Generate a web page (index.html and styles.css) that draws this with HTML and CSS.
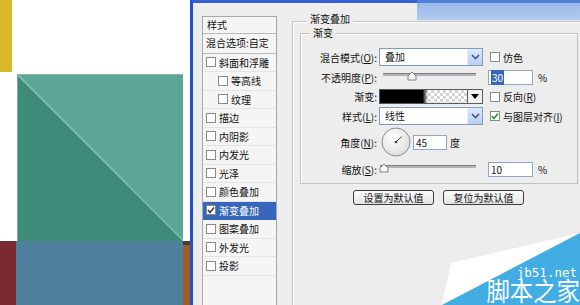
FILE: index.html
```html
<!DOCTYPE html>
<html lang="zh-CN">
<head>
  <title>图层样式 | 渐变叠加</title>
  <meta charset="UTF-8" />
  <meta name="viewport" content="width=device-width, initial-scale=1.0" />
  <link rel="stylesheet" href="styles.css">
</head>
<body>
  <div class="page">
    <div class="canvas">
      <div class="cv-top"><div class="yellow"></div></div>
      <div class="cv-mid"><div class="teal"></div></div>
      <div class="cv-bottom">
        <div class="red"></div>
        <div class="steel"></div>
        <div class="brown"></div>
      </div>
    </div>

    <div class="dialog">
      <div class="titlebar"></div>

      <div class="style-list">
        <div class="list-head">样式</div>
        <div class="list-blend">混合选项:自定</div>
        <div class="list-item"><span class="cb"></span>斜面和浮雕</div>
        <div class="list-item sub"><span class="cb"></span>等高线</div>
        <div class="list-item sub"><span class="cb"></span>纹理</div>
        <div class="list-item"><span class="cb"></span>描边</div>
        <div class="list-item"><span class="cb"></span>内阴影</div>
        <div class="list-item"><span class="cb"></span>内发光</div>
        <div class="list-item"><span class="cb"></span>光泽</div>
        <div class="list-item"><span class="cb"></span>颜色叠加</div>
        <div class="list-item active">
          <span class="cb"><svg width="8" height="8" viewBox="0 0 8 8"><polyline points="1,4 3,6.5 7,1.5" fill="none" stroke="#3a3a3a" stroke-width="1.6"/></svg></span>渐变叠加
        </div>
        <div class="list-item"><span class="cb"></span>图案叠加</div>
        <div class="list-item"><span class="cb"></span>外发光</div>
        <div class="list-item"><span class="cb"></span>投影</div>
      </div>

      <div class="outer-group">
        <div class="legend outer-legend">渐变叠加</div>
        <div class="inner-group">
          <div class="legend inner-legend">渐变</div>
          <div class="rows">
            <div class="row r1">
              <span class="lbl">混合模式(<u>O</u>):</span>
              <div class="select"><span class="sel-text">叠加</span><span class="sel-btn"><svg width="9" height="6" viewBox="0 0 9 6"><polyline points="1,1 4.5,4.5 8,1" fill="none" stroke="#3f5a8c" stroke-width="1.6"/></svg></span></div>
              <span class="cb"></span><span class="opt">仿色</span>
            </div>
            <div class="row r2">
              <span class="lbl">不透明度(<u>P</u>):</span>
              <svg class="slider" width="104" height="10" viewBox="0 0 104 10">
                <rect x="4" y="2" width="93" height="3" fill="#b4b4b4"/>
                <rect x="4" y="2" width="93" height="1" fill="#7d7d7d"/>
                <polygon points="29,9 29,5 33,1 37,5 37,9" fill="#fafafa" stroke="#808080"/>
              </svg>
              <span class="field wide"><span class="hl">30</span></span>
              <span class="unit">%</span>
            </div>
            <div class="row r3">
              <span class="lbl">渐变:</span>
              <div class="swatch"><span class="grad"></span><span class="sw-btn"><svg width="8" height="5" viewBox="0 0 8 5"><polygon points="0,0 8,0 4,5" fill="#000"/></svg></span></div>
              <span class="cb"></span><span class="opt">反向(<u>R</u>)</span>
            </div>
            <div class="row r4">
              <span class="lbl">样式(<u>L</u>):</span>
              <div class="select"><span class="sel-text">线性</span><span class="sel-btn"><svg width="9" height="6" viewBox="0 0 9 6"><polyline points="1,1 4.5,4.5 8,1" fill="none" stroke="#3f5a8c" stroke-width="1.6"/></svg></span></div>
              <span class="cb"><svg width="8" height="8" viewBox="0 0 8 8"><polyline points="1,4 3,6.5 7,1.5" fill="none" stroke="#1f9a2a" stroke-width="1.6"/></svg></span><span class="opt">与图层对齐(<u>I</u>)</span>
            </div>
            <div class="row r5">
              <span class="lbl">角度(<u>N</u>):</span>
              <svg class="dial" width="30" height="30" viewBox="0 0 30 30">
                <defs>
                  <radialGradient id="dialFill" cx="0.4" cy="0.35" r="0.7">
                    <stop offset="0" stop-color="#ffffff"/>
                    <stop offset="1" stop-color="#dcdcdc"/>
                  </radialGradient>
                </defs>
                <circle cx="15" cy="15" r="14" fill="url(#dialFill)" stroke="#8c8c8c"/>
                <line x1="15" y1="15" x2="20.5" y2="9.5" stroke="#444" stroke-width="1"/>
                <circle cx="15" cy="15" r="1.3" fill="#333"/>
              </svg>
              <span class="field narrow">45</span>
              <span class="unit deg">度</span>
            </div>
            <div class="row r6">
              <span class="lbl">缩放(<u>S</u>):</span>
              <svg class="slider" width="104" height="10" viewBox="0 0 104 10">
                <rect x="1" y="2" width="96" height="3" fill="#b4b4b4"/>
                <rect x="1" y="2" width="96" height="1" fill="#7d7d7d"/>
                <polygon points="1,9 1,5 5,1 9,5 9,9" fill="#fafafa" stroke="#808080"/>
              </svg>
              <span class="field wide">10</span>
              <span class="unit">%</span>
            </div>
          </div>
        </div>
        <div class="buttons">
          <button class="btn">设置为默认值</button>
          <button class="btn">复位为默认值</button>
        </div>
      </div>
    </div>
  </div>

  <div class="watermark">
    <svg width="140" height="72" viewBox="0 0 140 72">
      <polygon points="11,30 140,0 2,72" fill="#ffffff"/>
      <polygon points="2,72 140,0 140,72" fill="#41ade3"/>
    </svg>
    <div class="wm-text">
      <span class="wm-url">jb51.net</span>
      <span class="wm-name">脚本之家</span>
    </div>
  </div>
</body>
</html>
```

FILE: styles.css
```css
* {
  box-sizing: border-box;
}

body {
  margin: 0;
  width: 580px;
  height: 305px;
  overflow: hidden;
  position: relative;
  font-family: "Noto Sans CJK SC", sans-serif;
  font-size: 10px;
  color: #111;
  background: #ededed;
}

u {
  text-decoration-thickness: 1px;
  text-underline-offset: 1px;
}

.page {
  display: flex;
  height: 305px;
  overflow: hidden;
}

/* canvas on the left */
.canvas {
  flex: none;
  width: 190px;
  display: flex;
  flex-direction: column;
  background: #fff;
}

.cv-top {
  height: 74px;
}

.yellow {
  width: 12px;
  height: 72px;
  background: #dbb82a;
}

.cv-mid {
  height: 167px;
  padding-left: 17px;
}

.teal {
  width: 166px;
  height: 167px;
  background: linear-gradient(to bottom left, #5ba696 49.5%, #7bbbad 49.5%, #7bbbad 50.3%, #3f8b79 50.3%);
  box-shadow: inset 0 1px 0 #86b3a9, inset 1px 0 0 #7aa99e;
}

.cv-bottom {
  height: 64px;
  display: flex;
}

.red {
  width: 16px;
  background: #7b2a33;
}

.steel {
  width: 167px;
  background: #4e7f9d;
}

.brown {
  width: 7px;
  background: #9b5c2a;
  border-top: 4px solid #4d3a30;
}

/* dialog */
.dialog {
  flex: 1;
  position: relative;
  display: flex;
  align-items: flex-start;
  border-left: 3px solid #1f52cf;
  border-top: 3px solid #3461d4;
  background: #ededed;
}

.titlebar {
  position: absolute;
  top: -3px;
  right: 0;
  width: 175px;
  height: 20px;
  background: linear-gradient(#4f7fd8 0, #4f7fd8 3px, #98b7e8 3px, #b4cbef);
}

.style-list {
  flex: none;
  margin: 13px 0 0 9px;
  width: 75px;
  height: 300px;
  border: 1px solid #a8a8a8;
  background: #f5f5f5;
}

.list-head {
  height: 17px;
  line-height: 16px;
  padding-left: 4px;
  border-bottom: 1px solid #b9b9b9;
}

.list-blend {
  height: 19.5px;
  line-height: 18px;
  padding-left: 3px;
  border-bottom: 1px solid #b9b9b9;
}

.list-item {
  height: 18.5px;
  display: flex;
  align-items: center;
  padding-left: 3px;
  border-bottom: 1px solid #e4e4e4;
}

.list-item.sub {
  padding-left: 15px;
}

.list-item.active {
  background: #3667bd;
  color: #fff;
  border-bottom-color: #3667bd;
}

.cb {
  flex: none;
  width: 10px;
  height: 10px;
  margin-right: 3px;
  border: 1px solid #8a8a8a;
  background: #fff;
  display: flex;
  align-items: center;
  justify-content: center;
}

.outer-group {
  flex: none;
  margin: 18px 0 0 15px;
  width: 300px;
  height: 300px;
  padding-left: 7px;
  border: 1px solid #c2c2c2;
  box-shadow: inset 1px 1px 0 #fff;
}

.legend {
  width: fit-content;
  padding: 0 3px;
  line-height: 12px;
  background: #ededed;
}

.outer-legend {
  margin: -9px 0 0 7px;
}

.inner-group {
  margin-top: 8px;
  width: 278px;
  padding-bottom: 3px;
  border: 1px solid #c2c2c2;
  box-shadow: inset 1px 1px 0 #fff;
}

.inner-legend {
  margin: -7px 0 0 9px;
}

.rows {
  margin-top: 8px;
}

.row {
  display: flex;
  align-items: center;
}

.r1 { height: 20px; }
.r2 { height: 20px; }
.r3 { height: 19px; }
.r4 { height: 20px; }
.r5 { height: 32px; }
.r6 { height: 22px; }

.lbl {
  flex: none;
  width: 76px;
  margin-right: 2px;
  text-align: right;
  white-space: nowrap;
}

.select {
  flex: none;
  width: 104px;
  height: 18px;
  display: flex;
  border: 1px solid #7f9db9;
  background: #fff;
  margin-right: 7px;
}

.sel-text {
  flex: 1;
  padding-left: 5px;
  line-height: 16px;
}

.sel-btn {
  width: 15px;
  display: flex;
  align-items: center;
  justify-content: center;
  background: linear-gradient(#dfe8fb, #b9cdf4);
  border-left: 1px solid #e8eefc;
}

.opt {
  white-space: nowrap;
}

.slider {
  flex: none;
  display: block;
  margin-top: -3px;
}

.field {
  flex: none;
  height: 15px;
  line-height: 13px;
  padding-left: 2px;
  border: 1px solid #8fa9c4;
  background: #fff;
}

.field.wide {
  width: 45px;
  margin-left: 5px;
}

.field.narrow {
  width: 34px;
  margin-left: 2px;
}

.hl {
  background: #3667bd;
  color: #fff;
  padding: 0 1px;
}

.unit {
  margin-left: 5px;
}

.unit.deg {
  margin-left: 3px;
}

.swatch {
  flex: none;
  width: 104px;
  height: 15px;
  display: flex;
  border: 1px solid #5a5a5a;
  margin-right: 7px;
}

.grad {
  flex: 1;
  background:
    linear-gradient(to right, #000 49%, rgba(0, 0, 0, 0) 55%),
    repeating-conic-gradient(#d4d4d4 0 25%, #fff 0 50%) 0 0 / 6px 6px;
}

.sw-btn {
  width: 15px;
  display: flex;
  align-items: center;
  justify-content: center;
  border-left: 1px solid #5a5a5a;
  background: #f1f1f1;
}

.dial {
  flex: none;
  display: block;
  margin-left: 2px;
}

.buttons {
  display: flex;
  gap: 9px;
  margin: 6px 0 0 53px;
}

.btn {
  width: 81px;
  height: 15px;
  padding: 0;
  font-family: inherit;
  font-size: 10px;
  line-height: 13px;
  color: #111;
  border: 1px solid #3c3c3c;
  border-radius: 3px;
  background: linear-gradient(#fcfcfc, #e4e4e4);
}

/* site watermark in the corner */
.watermark {
  position: absolute;
  right: 0;
  bottom: 0;
  display: grid;
}

.watermark > * {
  grid-area: 1 / 1;
}

.watermark svg {
  display: block;
}

.wm-text {
  display: flex;
  flex-direction: column;
  align-items: flex-end;
  justify-content: flex-end;
  color: #fff;
}

.wm-url {
  font-family: "DejaVu Sans Mono", monospace;
  font-size: 12.5px;
  line-height: 12px;
  margin-right: 3px;
  margin-bottom: -2px;
}

.wm-name {
  font-size: 26px;
  line-height: 26px;
  margin-bottom: 2px;
  transform: scaleX(0.9);
  transform-origin: right bottom;
}
```
